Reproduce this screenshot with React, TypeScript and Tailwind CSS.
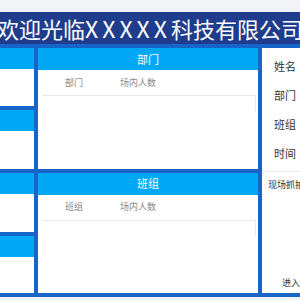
const font = { fontFamily: '"Noto Sans CJK SC", "Noto Sans", sans-serif' };

const SidePanel = ({ grow }: { grow: string }) => (
  <div className={`flex flex-col bg-white ${grow}`}>
    <div className="h-[21px] bg-[#00a8f5]" />
  </div>
);

const TablePanel = ({ title, col }: { title: string; col: string }) => (
  <div className="flex flex-1 flex-col bg-white">
    <div className="flex h-[22px] items-center justify-center bg-[#00a8f5] text-[11px] text-white">
      {title}
    </div>
    <div className="px-[4px] pr-[2px]">
      <div className="flex h-[26px] items-center border-b border-[#e6e9f0] text-[9px] text-[#888]">
        <div className="w-[64px] text-center">{col}</div>
        <div className="w-[64px] text-center">场内人数</div>
      </div>
      <div className="h-[15px] border-r border-[#e6e9f0]" />
    </div>
  </div>
);

const InfoRow = ({ label }: { label: string }) => (
  <div className="flex h-[29px] items-center pl-[12px] text-[11px] text-[#333]">
    {label}
  </div>
);

export default function App() {
  return (
    <div className="h-[300px] w-[300px] overflow-hidden bg-[#f1f3f6]" style={font}>
      <div className="h-[12px]" />
      <div className="flex h-[32px] items-center justify-center overflow-visible whitespace-nowrap bg-[#1f3d8c] text-[22px] text-white">
        欢迎光临<span className="text-[23px] tracking-[4px]">XXXXX</span>科技有限公司
      </div>
      <div className="-ml-[106px] flex h-[253px] w-[520px] gap-[4px] bg-[#1865c9] p-[4px]">
        <div className="flex w-[136px] flex-col gap-[4px]">
          <SidePanel grow="h-[58px]" />
          <SidePanel grow="h-[59px]" />
          <SidePanel grow="h-[59px]" />
          <SidePanel grow="flex-1" />
        </div>
        <div className="flex w-[220px] flex-col gap-[4px]">
          <TablePanel title="部门" col="部门" />
          <TablePanel title="班组" col="班组" />
        </div>
        <div className="flex flex-1 flex-col bg-white">
          <div className="h-[4px]" />
          <InfoRow label="姓名" />
          <InfoRow label="部门" />
          <InfoRow label="班组" />
          <InfoRow label="时间" />
          <div className="mt-[3px] border-t border-[#e6e9f0] pl-[6px] pt-[6px] text-[9px] text-[#333]">
            现场抓拍
          </div>
          <div className="mt-auto pb-[4px] pl-[20px] text-[9px] text-[#333]">进入</div>
        </div>
      </div>
    </div>
  );
}
